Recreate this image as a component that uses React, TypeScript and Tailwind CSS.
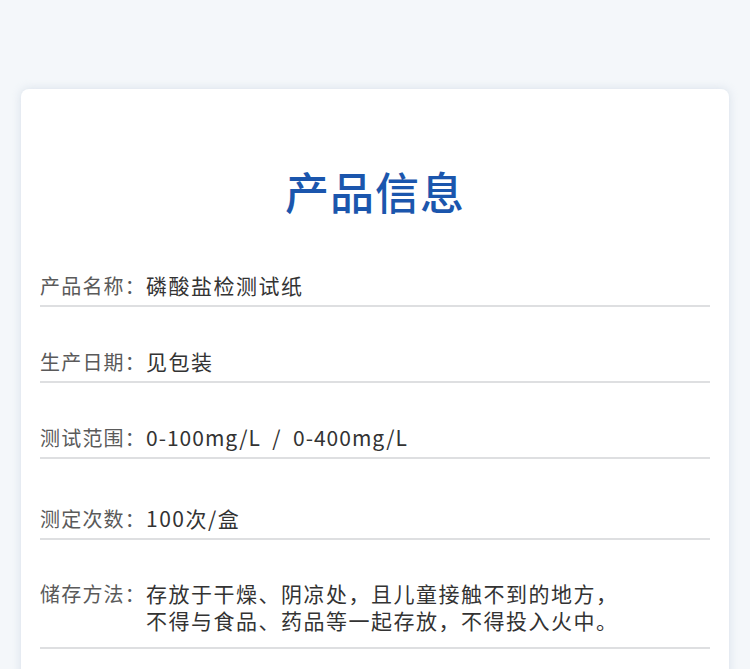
const rows: { label: string; value: string[]; latin?: boolean }[] = [
  { label: '产品名称：', value: ['磷酸盐检测试纸'] },
  { label: '生产日期：', value: ['见包装'] },
  { label: '测试范围：', value: ['0-100mg/L\u00a0 /\u00a0 0-400mg/L'], latin: true },
  { label: '测定次数：', value: ['100次/盒'] },
  {
    label: '储存方法：',
    value: ['存放于干燥、阴凉处，且儿童接触不到的地方，', '不得与食品、药品等一起存放，不得投入火中。'],
  },
];

export default function App() {
  return (
    <div
      className="h-[669px] bg-[#f4f7fa] pt-[89px] px-[21px] overflow-hidden"
      style={{ fontFamily: '"Noto Sans CJK SC", "Noto Sans", sans-serif' }}
    >
      <div className="bg-white rounded-[8px] shadow-[0_0_10px_rgba(180,195,215,0.45)] px-[19px] pb-[30px] min-h-[620px]">
        <h1 className="pt-[70px] text-center text-[44px] leading-[64px] font-medium tracking-[1px] text-[#1b56ad]">
          产品信息
        </h1>
        <div className="mt-[49px]">
          {rows.map((r, i) => (
            <div
              key={r.label}
              className={`flex border-b-2 border-[#dedfe1] ${
                i === 0
                  ? 'pb-[5px]'
                  : i === 1
                    ? 'pt-[41px] pb-[5px]'
                    : i === 2
                      ? 'pt-[41px] pb-[5px]'
                      : i === 3
                        ? 'pt-[46px] pb-[5px]'
                        : 'pt-[40px] pb-[13px]'
              }`}
            >
              <span className="shrink-0 w-[106px] text-[20px] leading-[28px] tracking-[1.2px] text-[#5a5a5a]">
                {r.label}
              </span>
              <div
                className={`text-[21px] leading-[27px] text-[#333333] ${
                  r.latin ? 'tracking-[1px]' : 'tracking-[1.5px]'
                }`}
              >
                {r.value.map((v) => (
                  <div key={v}>{v}</div>
                ))}
              </div>
            </div>
          ))}
        </div>
      </div>
    </div>
  );
}
